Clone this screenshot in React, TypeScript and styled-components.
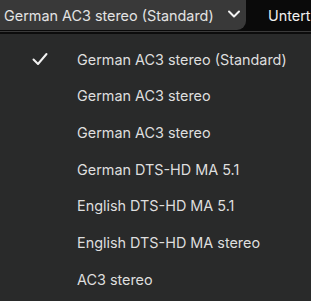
import React from "react";
import styled, { createGlobalStyle } from "styled-components";

const tracks = [
	"German AC3 stereo (Standard)",
	"German AC3 stereo",
	"German AC3 stereo",
	"German DTS-HD MA 5.1",
	"English DTS-HD MA 5.1",
	"English DTS-HD MA stereo",
	"AC3 stereo",
];

const GlobalStyle = createGlobalStyle`
	html, body {
		margin: 0;
		padding: 0;
		background: #292a2a;
		font-family: Inter, "Noto Sans", sans-serif;
		overflow: hidden;
	}
`;

const Page = styled.div`
	width: 311px;
	height: 301px;
	display: flex;
	flex-direction: column;
	background: #292a2a;
	overflow: hidden;
`;

const TopBar = styled.div`
	height: 30px;
	display: flex;
	align-items: stretch;
	gap: 22px;
	background: #0a0a0a;
	border-bottom: 1px solid #0a0a0a;
`;

const SelectButton = styled.button`
	width: 246px;
	flex-shrink: 0;
	display: flex;
	align-items: center;
	justify-content: space-between;
	padding: 0 5px 0 4px;
	border: none;
	border-radius: 0 0 9px 0;
	background: #393939;
	color: #e3e3e3;
	font-family: inherit;
	font-size: 14.4px;
	white-space: nowrap;
	text-align: left;
	cursor: pointer;
	svg {
		margin-top: -2px;
	}
`;

const Tab = styled.div`
	display: flex;
	align-items: center;
	color: #f0f0f0;
	font-size: 14.4px;
	white-space: nowrap;
`;

const Divider = styled.div`
	height: 1px;
	background: #3a3a3a;
	border-bottom: 2px solid #0c0c0c;
`;

const Menu = styled.ul`
	list-style: none;
	margin: 0;
	padding: 7px 0 0;
	flex: 1;
`;

const Item = styled.li`
	height: 36.67px;
	display: flex;
	align-items: center;
	color: #dedede;
	font-size: 14.4px;
	white-space: nowrap;
`;

const CheckSlot = styled.span`
	width: 77px;
	flex-shrink: 0;
	display: flex;
	padding-left: 32px;
	box-sizing: border-box;
`;

const Chevron = () => (
	<svg width="14" height="14" viewBox="0 0 14 14" fill="none">
		<path d="M2 4.5l5 5 5-5" stroke="#f2f2f2" strokeWidth="2" strokeLinecap="round" strokeLinejoin="round" />
	</svg>
);

const Check = () => (
	<svg width="16" height="14" viewBox="0 0 16 14" fill="none">
		<path d="M1.5 7.5l4.5 4.5 8.5-10" stroke="#f2f2f2" strokeWidth="2" strokeLinecap="round" strokeLinejoin="round" />
	</svg>
);

const App = (): JSX.Element => {
	return (
		<Page>
			<GlobalStyle />
			<TopBar>
				<SelectButton>
					<span>{tracks[0]}</span>
					<Chevron />
				</SelectButton>
				<Tab>Untertitel</Tab>
			</TopBar>
			<Divider />
			<Menu>
				{tracks.map((track, i) => (
					<Item key={i}>
						<CheckSlot>{i === 0 && <Check />}</CheckSlot>
						{track}
					</Item>
				))}
			</Menu>
		</Page>
	);
};

export default App;
